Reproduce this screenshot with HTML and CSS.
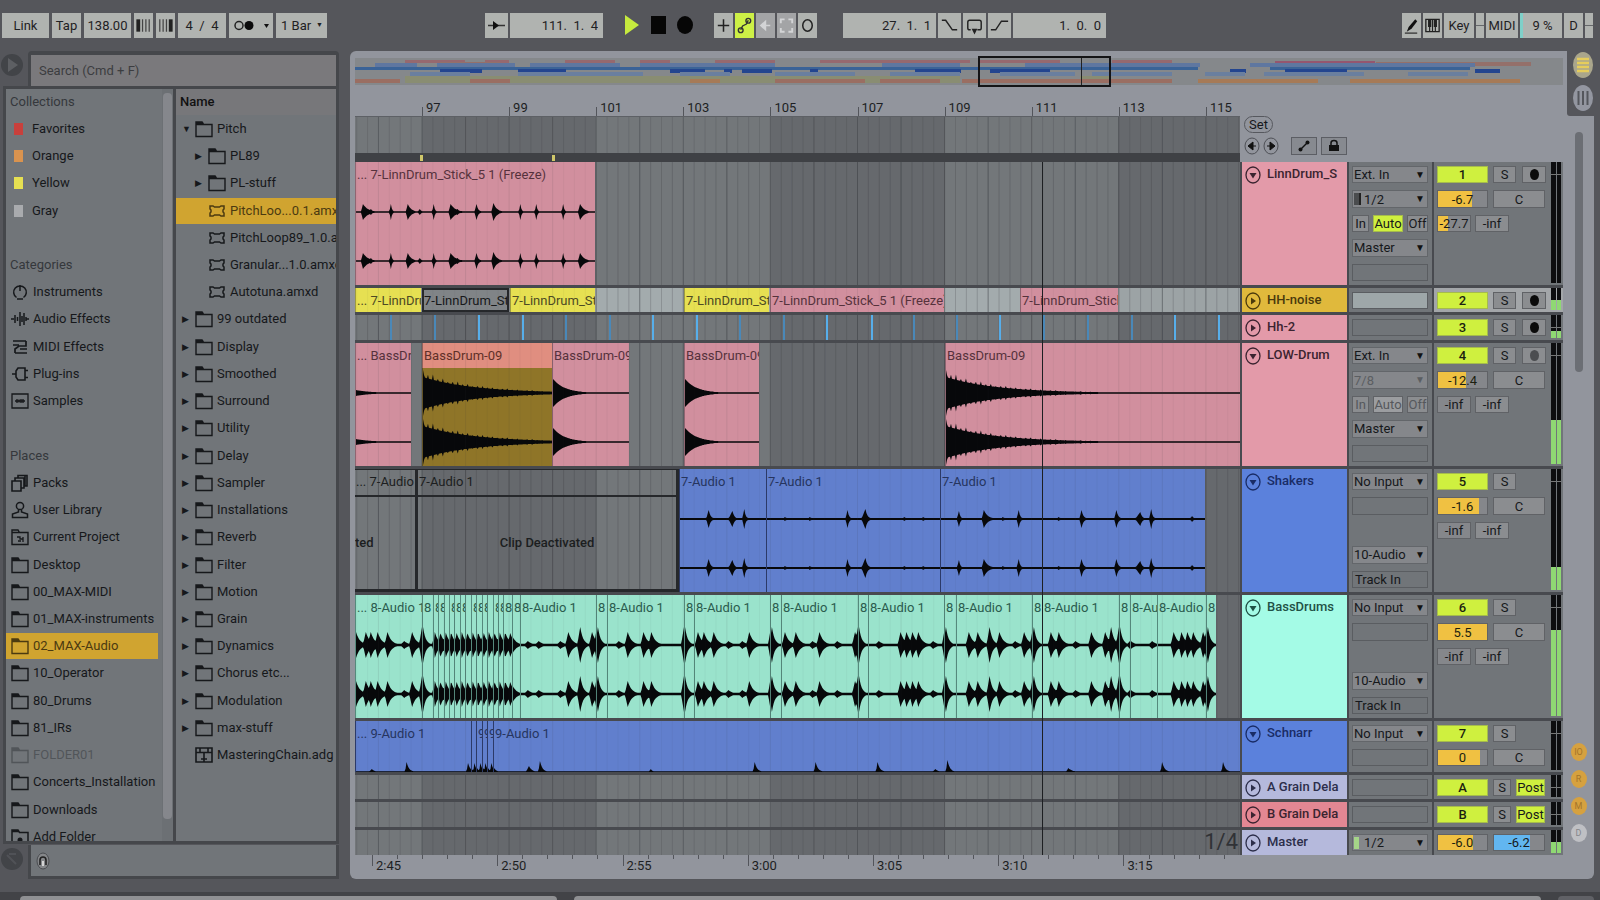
FILE: index.html
```
<!DOCTYPE html>
<html lang="en">
<head>
<meta charset="utf-8">
<title>Arrangement</title>
<link rel="stylesheet" href="styles.css">
</head>
<body>
<svg class="symbols" aria-hidden="true">
  <symbol id="folder" viewBox="0 0 18 18"><path d="M1 16.5V2h6l1.500 2.500H17v12zM1 2.500h6.500l1 2H1z" fill="none" stroke="currentColor" stroke-width="1.400"/><path d="M1 2h6l2 2.500H1z" fill="currentColor"/></symbol>
  <symbol id="device" viewBox="0 0 18 18"><path d="M2 4h3l1.500 1h5L13 4h3v3l-1 1v2l1 1v3h-3l-1.500-1h-5L5 14H2v-3l1-1V8L2 7z" fill="none" stroke="currentColor" stroke-width="1.500"/></symbol>
  <symbol id="rack" viewBox="0 0 18 18"><path d="M1 2h16v14H1zM1 6.500h16M9 6.500V16M5 2v4.500M13 2v4.500M6 13h6" fill="none" stroke="currentColor" stroke-width="1.600"/></symbol>
  <symbol id="instrument" viewBox="0 0 18 18"><path d="M5.500 14.500a6.300 6.300 0 1 1 7 0M9 2v6M6 16h6" fill="none" stroke="currentColor" stroke-width="1.500"/></symbol>
  <symbol id="audiofx" viewBox="0 0 18 18"><path d="M0 9h3M4 5v8M6.500 7v4M9 2v14M11 6v6M13 3v12M15 7v4M15 9h3" fill="none" stroke="currentColor" stroke-width="1.500"/></symbol>
  <symbol id="midifx" viewBox="0 0 18 18"><path d="M2 3h13M2 7h6M15 3v5H8L4 11v4M9 11h7M4 15h12" fill="none" stroke="currentColor" stroke-width="1.700"/></symbol>
  <symbol id="plugin" viewBox="0 0 18 18"><path d="M1 9h4M5 6l2-3h7v12H7l-2-3zM14 5.500h3M14 12.500h3" fill="none" stroke="currentColor" stroke-width="1.600"/></symbol>
  <symbol id="sample" viewBox="0 0 18 18"><path d="M1 2h16v14H1zM4 9h10M6 7v4M8 7.500v3M10 7v4M12 7v4" fill="none" stroke="currentColor" stroke-width="1.300"/></symbol>
  <symbol id="packs" viewBox="0 0 18 18"><path d="M1 7h9v10H1zM4 7V4h9v10h-3M7 4V1.500h9V12h-3M14 2v10" fill="none" stroke="currentColor" stroke-width="1.600"/></symbol>
  <symbol id="user" viewBox="0 0 18 18"><circle cx="9" cy="5" r="3.600" fill="none" stroke="currentColor" stroke-width="1.500"/><path d="M7.500 8.500v2.500L1.500 13v3.500h15V13l-6-2V8.500" fill="none" stroke="currentColor" stroke-width="1.500"/></symbol>
  <symbol id="project" viewBox="0 0 18 18"><path d="M1 16.500V2h6l1.500 2.500H17v12zM1 4.500h8" fill="none" stroke="currentColor" stroke-width="1.400"/><path d="M6 9h3v2h3V9M12 9v5M7 13h3" fill="none" stroke="currentColor" stroke-width="1.300"/></symbol>
  <symbol id="addfolder" viewBox="0 0 18 18"><path d="M1 18V2h6l1.500 2.500H17V18M1 3.500h7" fill="none" stroke="currentColor" stroke-width="1.500"/><circle cx="9" cy="12" r="2.500" fill="currentColor"/></symbol>
</svg>

<div class="app">
  <header class="toolbar">
    <div class="group">
      <button class="tb w-link">Link</button>
      <button class="tb w-tap">Tap</button>
      <input class="tb w-tempo" aria-label="Tempo" value="138.00">
      <button class="tb w-19" aria-label="Nudge down"><svg viewBox="0 0 20 25"><path d="M4.500 6v13" stroke="#222" stroke-width="4"/><path d="M9 6v13M12.500 6v13M16 6v13" stroke="#444" stroke-width="1.300"/></svg></button>
      <button class="tb w-19" aria-label="Nudge up"><svg viewBox="0 0 20 25"><path d="M15.500 6v13" stroke="#222" stroke-width="4"/><path d="M4 6v13M7.500 6v13M11 6v13" stroke="#444" stroke-width="1.300"/></svg></button>
      <input class="tb w-sig" aria-label="Time signature" value="4  /  4">
      <button class="tb w-metro" aria-label="Metronome"><svg viewBox="0 0 44 25"><circle cx="10" cy="12.500" r="4" fill="none" stroke="#222" stroke-width="1.500"/><circle cx="20" cy="12.500" r="4.500" fill="#0b0b0b"/><path d="M35 11h5l-2.500 4z" fill="#111"/></svg></button>
      <div class="tb quant"><select aria-label="Quantization"><option>1 Bar</option></select></div>
    </div>
    <div class="group center">
      <button class="tb w-follow" aria-label="Follow"><svg viewBox="0 0 23 25"><path d="M3 12.500h17" stroke="#333" stroke-width="1.500"/><path d="M8 8l6 4.500-6 4.500z" fill="#111"/></svg></button>
      <input class="tb pos" aria-label="Arrangement position" value="111.  1.  4">
      <div class="transport">
        <button aria-label="Play"><svg viewBox="0 0 20 24"><path d="M3 2l14 10L3 22z" fill="#c6ea3e"/></svg></button>
        <button aria-label="Stop"><svg viewBox="0 0 20 24"><path d="M3 3h15v18H3z" fill="#060606"/></svg></button>
        <button aria-label="Record"><svg viewBox="0 0 20 24"><ellipse cx="11" cy="12" rx="8" ry="9" fill="#060606"/></svg></button>
      </div>
      <button class="tb w-19" aria-label="Overdub"><svg viewBox="0 0 20 25"><path d="M4 12.500h12M10 6v13" stroke="#222" stroke-width="1.600"/></svg></button>
      <button class="tb w-19 on" aria-label="Automation arm"><svg viewBox="0 0 20 25"><path d="M6 17l2-4 4-2 2-4" fill="none" stroke="#333" stroke-width="1.500"/><circle cx="6" cy="17.500" r="2.500" fill="none" stroke="#333" stroke-width="1.500"/><circle cx="14" cy="7.500" r="2.500" fill="none" stroke="#333" stroke-width="1.500"/></svg></button>
      <button class="tb w-19 dim" aria-label="Re-enable automation"><svg viewBox="0 0 20 25"><path d="M10 8v9l-5-4.500zM10 12.500h5" fill="#d3d4d6" stroke="#d3d4d6" stroke-width="1.500"/></svg></button>
      <button class="tb w-19 dim" aria-label="Capture"><svg viewBox="0 0 20 25"><path d="M4 10V6h4M12 6h4v4M16 15v4h-4M8 19H4v-4" fill="none" stroke="#d3d4d6" stroke-width="2"/></svg></button>
      <button class="tb w-19" aria-label="Session record"><svg viewBox="0 0 20 25"><ellipse cx="10" cy="12.500" rx="5" ry="6" fill="none" stroke="#222" stroke-width="1.600"/></svg></button>
      <span class="spacer"></span>
      <input class="tb loop" aria-label="Loop start" value="27.  1.  1">
      <button class="tb w-23" aria-label="Punch in"><svg viewBox="0 0 24 25"><path d="M4 7h4l7 10h5" fill="none" stroke="#222" stroke-width="1.500"/></svg></button>
      <button class="tb w-23" aria-label="Loop"><svg viewBox="0 0 24 25"><path d="M8 17H7q-2 0-2-2V9q0-2 2-2h10q2 0 2 2v6q0 2-2 2h-2" fill="none" stroke="#222" stroke-width="1.500"/><path d="M9 16h6l-3 6z" fill="#222"/></svg></button>
      <button class="tb w-23" aria-label="Punch out"><svg viewBox="0 0 24 25"><path d="M3 17h5l6-9h7" fill="none" stroke="#222" stroke-width="1.500"/></svg></button>
      <input class="tb loop" aria-label="Loop length" value="1.  0.  0">
    </div>
    <div class="group right">
      <button class="tb w-19" aria-label="Draw mode"><svg viewBox="0 0 20 25"><path d="M5 19l2-5 7-8 2 2-6 8z" fill="#111"/><path d="M3 20.500h13" stroke="#222" stroke-width="1.200"/></svg></button>
      <button class="tb w-19" aria-label="Computer MIDI keyboard"><svg viewBox="0 0 20 25"><path d="M3 6h14v13H3z" fill="none" stroke="#222" stroke-width="1.400"/><path d="M7 6v8M13 6v8" stroke="#222" stroke-width="3.400"/><path d="M10 6v13M7 14v5M13 14v5" stroke="#222" stroke-width="1.200"/></svg></button>
      <button class="tb w-key">Key</button>
      <span class="tb w-led"></span>
      <button class="tb w-midi">MIDI</button>
      <span class="tb cpu">9 %</span>
      <button class="tb w-d">D</button>
      <span class="tb w-led"></span>
    </div>
  </header>

  <div class="workspace">
    <aside class="browser">
      <button class="corner" aria-label="Hide browser"><svg viewBox="0 0 24 28"><circle cx="12" cy="14" r="11" fill="#424448"/><path d="M8 7l10 7-10 7z" fill="#5d5f63"/></svg></button>
      <div class="search-wrap"><input class="search" type="search" aria-label="Search" placeholder="Search (Cmd + F)"></div>
      <div class="panes">
        <nav class="places" id="places"></nav>
        <div class="places-scroll"><i></i></div>
        <div class="files" id="files"></div>
      </div>
      <button class="corner" aria-label="Show info"><svg viewBox="0 0 24 28"><circle cx="12" cy="14" r="11" fill="#424448"/><path d="M7 10l9 9M9 9h7" stroke="#505257" stroke-width="2"/></svg></button>
      <div class="preview"><button aria-label="Preview"><svg viewBox="0 0 14 18"><ellipse cx="7" cy="9" rx="6" ry="8" fill="#85878a" stroke="#4a4c50"/><path d="M4 13V8a3 3 0 0 1 6 0v5" fill="none" stroke="#222" stroke-width="1.600"/><path d="M7 9v5" stroke="#d5d5d5" stroke-width="2"/></svg></button></div>
    </aside>

    <main class="arrange">
      <div class="overview" id="overview"></div>
      <div class="side-tabs">
        <button aria-label="Arrangement view"><svg viewBox="0 0 24 28"><ellipse cx="12" cy="14" rx="10" ry="13" fill="#aaa68c"/><path d="M6 8h12M6 12h12M6 16h12M6 20h12" stroke="#e6cd5c" stroke-width="2.500"/></svg></button>
        <button aria-label="Session view"><svg viewBox="0 0 24 28"><ellipse cx="12" cy="14" rx="10" ry="13" fill="#9396a0"/><path d="M7.500 7v14M12 7v14M16.500 7v14" stroke="#54565c" stroke-width="2"/></svg></button>
      </div>
      <div class="body">
        <section class="timeline">
          <div class="ruler" id="ruler"></div>
          <div class="scrub" id="scrub"></div>
          <div class="loopbar" id="loopbar"></div>
          <div class="lanes" id="lanes"></div>
          <div class="time" id="time"></div>
        </section>
        <section class="controls">
          <div class="locators">
            <button class="set">Set</button>
            <div class="locator-row">
              <button class="round" aria-label="Previous locator"><svg viewBox="0 0 16 18"><ellipse cx="8" cy="9" rx="7" ry="8" fill="none" stroke="#4e5056"/><path d="M9 5v8l-5-4zM8 9h4" fill="#111" stroke="#111"/></svg></button>
              <button class="round" aria-label="Next locator"><svg viewBox="0 0 16 18"><ellipse cx="8" cy="9" rx="7" ry="8" fill="none" stroke="#4e5056"/><path d="M7 5v8l5-4zM8 9H4" fill="#111" stroke="#111"/></svg></button>
              <button class="square first" aria-label="Automation mode"><svg viewBox="0 0 24 16"><path d="M8 12l8-8" stroke="#111" stroke-width="1.500"/><circle cx="8.500" cy="11.500" r="2" fill="#111"/><circle cx="15.500" cy="4.500" r="2" fill="#111"/></svg></button>
              <button class="square" aria-label="Lock envelopes"><svg viewBox="0 0 24 16"><path d="M7 7h10v6H7z" fill="#111"/><path d="M9 7V5a3 2.500 0 0 1 6 0v2" fill="none" stroke="#111" stroke-width="1.500"/></svg></button>
            </div>
          </div>
          <div id="tracks"></div>
        </section>
        <div class="side">
          <div class="vscroll"></div>
          <div class="toggles">
            <button class="show">IO</button><button class="show">R</button><button class="show">M</button><button class="show off">D</button>
          </div>
        </div>
      </div>
    </main>
  </div>
  <footer class="bottom"><div></div><div></div><div></div></footer>
</div>
<script src="app.js"></script>
</body>
</html>
```

FILE: styles.css
```
* { box-sizing: border-box; }
:root { --line: #484a4f; --light: #92959d; --panel: #717579; --text: #16181b; }
body { margin: 0; background: #55565b; color: var(--text); font: 400 13px/16px Roboto, "Liberation Sans", sans-serif; overflow: hidden; }
button, input, select { font: inherit; color: inherit; margin: 0; padding: 0; border: 0; border-radius: 0; background: none; }
svg { display: block; }
.symbols { display: none; }
.app { display: flex; flex-direction: column; min-height: 100vh; }

/* toolbar */
.toolbar { display: grid; grid-template-columns: 1fr auto 1fr; height: 51px; padding: 13px 7px 0 2px; }
.group { display: flex; align-items: flex-start; gap: 3px; }
.group.center { gap: 2px; margin-right: 4px; }
.group.right { gap: 2px; justify-content: flex-end; }
.tb { display: block; height: 25px; background: #b0b3b0; color: #1f2123; text-align: center; line-height: 25px; }
.tb svg { width: 100%; height: 25px; }
.tb.on { background: #cdf046; }
.tb.dim { background: #a3a4a6; }
.w-link { width: 47px; } .w-tap { width: 29px; } .w-tempo { width: 47px; } .w-19 { width: 19px; } .w-23 { width: 23px; }
.w-sig { width: 48px; white-space: pre; } .w-metro { width: 44px; } .w-follow { width: 23px; }
.w-key { width: 30px; } .w-midi { width: 32px; } .w-d { width: 19px; }
.w-led { width: 8px; background: linear-gradient(#b0b3b0 48%, #66686b 48% 54%, #b0b3b0 54%); }
.quant { position: relative; width: 51px; }
.quant::after { content: "▼"; position: absolute; right: 4px; top: 0; font-size: 7px; }
.quant select { appearance: none; width: 100%; height: 25px; padding-left: 5px; }
.pos, .loop { width: 93px; padding-right: 5px; text-align: right; white-space: pre; }
.transport { display: flex; gap: 6px; padding: 0 18px 0 17px; }
.transport svg { width: 20px; height: 24px; }
.spacer { width: 22px; }
.cpu { width: 42px; border-left: 3px solid #7fd0c9; }

/* browser */
.workspace { display: flex; flex: 1; gap: 11px; }
.browser { display: grid; grid-template: 35px 1fr 34px / 28px 1fr; width: 339px; }
.corner svg { width: 24px; height: 28px; }
.corner { align-self: start; }
.search-wrap { background: #45474b; padding: 4px 3px 0; border-radius: 4px 4px 0 0; }
.search { width: 100%; height: 31px; background: #7a797c; padding-left: 8px; appearance: none; }
.search::placeholder { color: #3c3d40; opacity: 1; }
.panes { grid-column: 1 / 3; display: grid; grid-template-columns: 156px 14px 1fr; margin-left: 3px; padding: 3px; background: #45474b; height: 758px; }
.places, .files { background: var(--panel); overflow: hidden; }
.rows { display: grid; grid-template-rows: repeat(28, 1fr); height: 101.4%; margin: -1px 0 0; padding: 0; list-style: none; }
.rows li { display: flex; align-items: center; min-height: 0; overflow: hidden; white-space: nowrap; }
.rows a { display: flex; align-items: center; width: 100%; height: 26px; color: inherit; text-decoration: none; }
.rows a.sel { background: #d0a430; color: #4b3a10; }
.rows .head { padding-left: 4px; color: #35383c; }
.rows a.off { color: #515559; }
.rows svg { flex: none; width: 18px; height: 18px; }
.places a { padding-left: 5px; gap: 4px; margin-right: 4px; }
.swatch { flex: none; width: 9px; height: 12px; margin: 0 5px 0 3px; }
.places-scroll { background: #6c7074; border-right: 3px solid #45474b; padding: 4px 1px 22px 1px; }
.places-scroll i { display: block; height: 100%; background: #85878c; border-radius: 4px; }
.files .name { background: #77777a; padding-left: 4px; color: #111; font-weight: 500; }
.files a { padding-left: 6px; gap: 4px; }
.files a.child { padding-left: 19px; }
.files a.leaf { padding-left: 32px; }
.files a.rack-row { padding-left: 19px; }
.files .tw { width: 9px; font-size: 9px; }
.preview { background: #45474b; padding: 0 3px 3px; }
.preview button { display: block; width: 100%; height: 31px; padding-left: 5px; background: var(--panel); }
.preview svg { width: 14px; height: 18px; }

/* arrangement */
.arrange { position: relative; flex: 1; display: flex; flex-direction: column; min-width: 0; margin-right: 6px; padding: 7px 0 0 5px; background: var(--light); border-radius: 6px; }
.overview { position: relative; height: 27px; margin-right: 31px; background: #85888b; }
.overview svg { width: 100%; height: 27px; }
.view { position: absolute; top: -2px; height: 31px; border: 2px solid #141416; }
.view::after { content: ""; position: absolute; left: 78%; top: 0; bottom: 0; width: 1px; background: #222; }
.side-tabs { position: absolute; right: -6px; top: 0; width: 33px; height: 65px; padding: 0 0 0 4px; background: #55565b; border-radius: 0 0 0 3px; }
.side-tabs button { display: block; margin-bottom: 5px; }
.side-tabs svg { width: 24px; height: 28px; }
.body { flex: 1; display: grid; grid-template-columns: minmax(0, 1fr) 323px 31px; }
.timeline { min-width: 0; }
.ruler { position: relative; height: 31px; }
.tick { position: absolute; bottom: 0; height: 9px; border-left: 1px solid #53555b; }
.tick span { position: absolute; left: 3px; bottom: 0; color: #1d1f23; }
.scrub { position: relative; height: 37px; background: #73777a; overflow: hidden; border-top: 1px solid #5d6065; }
.loopbar { position: relative; height: 9px; background: #3f4145; }
.mark { position: absolute; top: 2px; width: 3px; height: 6px; background: #cfc76a; }
.gridlines { position: absolute; left: 0; top: 0; width: 100%; height: 100%; pointer-events: none; }
.gridlines.over { opacity: .25; }
.lanes { position: relative; }
.lane, .track { border-bottom: 3px solid var(--line); }
.lane { position: relative; overflow: hidden; background: #73777a; }
.h-tall { height: 126px; } .h-mid { height: 54px; } .h-low { height: 27px; } .h-low2 { height: 28px; } .h-last { height: 25px; }
.lane.h-last { border-bottom: 0; }
.lane.lit { background: #a3abad; }
.lane.lit .shade { opacity: .3; }
.shade { position: absolute; top: 0; bottom: 0; background: rgba(60, 60, 64, .22); }
.clip { position: absolute; top: 0; bottom: 0; overflow: hidden; white-space: nowrap; padding: 5px 0 0 1px; border-left: 1px solid rgba(20, 22, 30, .35); }
.clip b { position: relative; font-weight: 400; }
.clip svg { position: absolute; left: 0; top: 0; width: 100%; height: 100%; }
.pink { background: #d18f9e; color: #56323c; }
.yellow { background: #e6e052; color: #4d4a24; }
.grey { background: #808487; color: #17181a; border: 2px solid #26282b; padding: 3px 0 0; }
.gold { background: linear-gradient(#e08e80 25px, #8f7528 25px); color: #5f3028; }
.blue { background: #617fcd; color: #26355f; border-color: #2c3a68; }
.mint { background: #9ae3cc; color: #2b5b4e; border-color: #55897c; }
.dead { border: solid #26282b; border-width: 1px 3px 3px 0; color: #1c1e20; padding-top: 4px; }
.dead::after { content: ""; position: absolute; left: 0; right: 0; top: 25px; border-top: 2px solid #26282b; }
.dead em { position: absolute; left: 0; right: 0; top: 65px; text-align: center; font-style: normal; font-weight: 500; }
.dead em.cut { text-align: left; }
.note { position: absolute; top: 0; bottom: 0; width: 2px; background: #4a88b8; }
.note.hot { background: #57aeea; }
.playhead { position: absolute; top: 0; bottom: 0; width: 1px; background: #1d1f22; }
.zoomlevel { position: absolute; right: 2px; bottom: 2px; font-size: 22px; line-height: 22px; color: #303236; }
.time { position: relative; height: 24px; }
.time .tick { top: 0; bottom: auto; height: 11px; }
.time .tick.minor { height: 4px; }
.time .tick span { top: 3px; bottom: auto; }

/* track controls */
.locators { height: 77px; padding: 31px 0 0 4px; }
.set { display: block; width: 29px; height: 17px; border: 1px solid #56585e; border-radius: 9px; line-height: 15px; }
.locator-row { display: flex; gap: 3px; margin-top: 4px; align-items: center; }
.round svg { width: 16px; height: 18px; }
.square { height: 18px; width: 26px; border: 1px solid #5c5e64; background: #878a90; }
.square.first { margin-left: 9px; margin-right: 1px; }
.square svg { width: 24px; height: 16px; }
.track { display: grid; grid-template-columns: 105px 83px 129px; gap: 2px; padding-left: 2px; background: var(--line); }
.track.h-last { border: 0; }
.title { display: flex; align-items: flex-start; gap: 6px; padding: 4px 0 0 3px; white-space: nowrap; overflow: hidden; color: #3b2430; font-weight: 500; }
.title.c-blue { color: #192c66; } .title.c-mint { color: #1f5145; } .title.c-lav { color: #2c2e4a; } .title.c-sun { color: #4a3a0c; }
.title svg { width: 16px; height: 18px; flex: none; }
.c-rose { background: #e39aa9; } .c-sun { background: #e0b93c; } .c-blue { background: #5b81dc; } .c-mint { background: #a4fbe6; } .c-lav { background: #b5b9dc; } .c-red { background: #e38793; }
.io, .mix { display: grid; align-content: start; grid-auto-rows: 17px; gap: 7px; padding: 4px 4px 0 3px; background: var(--panel); min-height: 0; }
.h-tall .io, .h-tall .mix { grid-template-rows: repeat(5, minmax(0, 1fr)); align-content: stretch; padding-bottom: 4px; }
.mix { position: relative; padding-right: 18px; }
.mix.lit { background: #a3a6a9; }
.box { border: 1px solid #5a5d61; min-height: 0; line-height: 15px; padding-left: 2px; white-space: nowrap; overflow: hidden; }
.box.lit { background: #9ea7a9; }
.sel-wrap { position: relative; background: #85878b; border: 1px solid #63666a; min-height: 0; }
.sel-wrap::after { content: "▼"; position: absolute; right: 2px; top: 0; font-size: 10px; line-height: 15px; color: #111; pointer-events: none; }
.sel-wrap select { display: block; appearance: none; width: 100%; height: 100%; padding-left: 1px; line-height: 15px; }
.sel-wrap.ch select { padding-left: 11px; }
.sel-wrap.ch::before { content: ""; position: absolute; left: 1px; top: 2px; width: 5px; height: 12px; border-right: 2px solid #222; background: #4a4c4e; }
.sel-wrap.live::before { background: #a5d588; border-right: 0; }
.sel-wrap.gone { color: #5b5e62; }
.sel-wrap.gone::after { color: #5b5e62; }
.line { display: flex; min-height: 0; }
.line.mon { justify-content: space-between; }
.b { height: 100%; border: 1px solid #606266; background: #8b8d90; text-align: center; line-height: 15px; white-space: nowrap; overflow: hidden; }
.b.in { width: 17px; } .b.auto { width: 30px; } .b.off { width: 21px; }
.b.lime { background: #cff03f; border-color: #a5bb4c; font-weight: 500; }
.b.soft { color: #55585c; }
.b.soft.auto { background: #9b9da0; }
.b.num { width: 51px; margin-right: 5px; color: #1c1f10; }
.b.s { width: 23px; margin-right: 6px; }
.b.rec { width: 24px; }
.b.c { width: 52px; }
.b.sm { width: 18px; margin-right: 5px; }
.b.post { width: 29px; font-weight: 400; }
.b.auto { font-weight: 400; }
.b.send { width: 34px; margin-right: 4px; }
.rec i { display: block; width: 9px; height: 11px; margin: 0 auto; border-radius: 50%; background: #0b0b0b; }
.rec.idle i { background: #4b4d50; }
.meter { position: absolute; right: 2px; top: 0; bottom: 2px; width: 10px; display: flex; gap: 1px; }
.meter i { position: relative; flex: 1; background: #0d0d0f; }
.meter i::before { content: ""; position: absolute; left: 0; right: 0; top: 12px; border-top: 1px solid #777; }
.meter i::after { content: ""; position: absolute; left: 0; right: 0; bottom: 0; height: var(--level); background: #8fd873; }

/* right edge */
.side { display: flex; flex-direction: column; justify-content: space-between; padding: 47px 0 37px; align-items: center; }
.vscroll { width: 8px; height: 240px; background: #6b6e74; border-radius: 4px; }
.toggles { display: flex; flex-direction: column; gap: 9px; }
.show { display: block; width: 16px; height: 18px; border-radius: 50%; background: #d6a13f; color: #a4752a; font-size: 9px; line-height: 18px; text-align: center; overflow: hidden; }
.show.off { background: #bfc0c4; color: #85878b; }

.bottom { display: grid; grid-template-columns: 539fr 972fr 36fr; gap: 17px; height: 21px; padding: 3px 6px 0 20px; background: linear-gradient(#55565b 13px, #424347 13px); align-items: end; }
.bottom div { height: 4px; background: #8f9093; border-radius: 4px 4px 0 0; }
.bottom div:last-child { background: #606166; }
```

FILE: app.js
```
// Horizontal view of the arrangement, in timeline units.
const FROM = 355, SPAN = 885;
const pct = x => ((x - FROM) / SPAN * 100).toFixed(3) + '%';
const wpct = w => (w / SPAN * 100).toFixed(3) + '%';
const $ = id => document.getElementById(id);
const icon = n => `<svg aria-hidden="true"><use href="#${n}"/></svg>`;

/* ---------- browser ---------- */
const places = [
  ['head', 'Collections'], ['#c8403c', 'Favorites'], ['#d9934f', 'Orange'], ['#e6e052', 'Yellow'], ['#a9abae', 'Gray'], null,
  ['head', 'Categories'], ['instrument', 'Instruments'], ['audiofx', 'Audio Effects'], ['midifx', 'MIDI Effects'], ['plugin', 'Plug-ins'], ['sample', 'Samples'], null,
  ['head', 'Places'], ['packs', 'Packs'], ['user', 'User Library'], ['project', 'Current Project'], ['folder', 'Desktop'], ['folder', '00_MAX-MIDI'],
  ['folder', '01_MAX-instruments'], ['folder', '02_MAX-Audio', 'sel'], ['folder', '10_Operator'], ['folder', '80_Drums'], ['folder', '81_IRs'],
  ['folder', 'FOLDER01', 'off'], ['folder', 'Concerts_Installation'], ['folder', 'Downloads'], ['addfolder', 'Add Folder'],
];
$('places').innerHTML = '<ul class="rows">' + places.map(p => {
  if (!p) return '<li></li>';
  const [k, t, c = ''] = p;
  if (k === 'head') return `<li class="head">${t}</li>`;
  const mark = k[0] === '#' ? `<i class="swatch" style="background:${k}"></i>` : icon(k);
  return `<li><a href="#" class="${c}">${mark}${t}</a></li>`;
}).join('') + '</ul>';

const folders = ['99 outdated', 'Display', 'Smoothed', 'Surround', 'Utility', 'Delay', 'Sampler', 'Installations', 'Reverb', 'Filter', 'Motion', 'Grain', 'Dynamics', 'Chorus etc...', 'Modulation', 'max-stuff'];
const dir = (t, c = '', tw = '▶') => `<li><a href="#" class="${c}"><span class="tw">${tw}</span>${icon('folder')}${t}</a></li>`;
const leaf = (t, c = '', i = 'device') => `<li><a href="#" class="${c}">${icon(i)}${t}</a></li>`;
$('files').innerHTML = '<ul class="rows"><li class="name">Name</li>' + dir('Pitch', '', '▼') + dir('PL89', 'child') + dir('PL-stuff', 'child')
  + leaf('PitchLoo...0.1.amxd', 'leaf sel') + leaf('PitchLoop89_1.0.amxd', 'leaf') + leaf('Granular...1.0.amxd', 'leaf') + leaf('Autotuna.amxd', 'leaf')
  + folders.map(f => dir(f)).join('') + leaf('MasteringChain.adg', 'rack-row', 'rack') + '</ul>';

/* ---------- overview ---------- */
const bands = [
  ['#96696f', 2, 3, [[405,60],[485,24],[565,50],[640,30],[715,60],[820,150],[980,20],[1000,60],[1112,60]]],
  ['#95566f', 3, 5, [[1275,100]]],
  ['#94706a', 4, 4, [[440,60],[1376,155]]],
  ['#5f77a0', 5, 4, [[375,42],[437,78],[530,90],[640,135],[882,78],[1025,175],[1250,50],[1265,210]]],
  ['#3a6397', 9, 3, [[355,843],[1270,200]]],
  ['#23458f', 11, 4, [[440,42],[518,48],[670,35],[724,8],[742,30],[810,8],[915,46],[990,60],[1230,16],[1285,62],[1305,20],[1475,25]]],
  ['#6a7f9f', 14, 4, [[410,60],[518,125],[680,50],[775,80],[890,70],[1000,75],[1092,80],[1205,40],[1264,100],[1408,60]]],
  ['#898d72', 18, 7, [[405,390],[790,170],[1080,30]]],
  ['#9a6e62', 21, 4, [[355,45],[470,40],[775,90],[880,60],[962,210]]],
  ['#a67a57', 21, 4, [[690,30],[1198,120],[1350,170]]],
];
$('overview').innerHTML = '<svg viewBox="355 0 1208 27" preserveAspectRatio="none">' +
  bands.map(([c, y, h, s]) => s.map(([x, w]) => `<rect x="${x}" y="${y}" width="${w}" height="${h}" fill="${c}"/>`).join('')).join('') +
  `</svg><div class="view" style="left:${(623 / 12.08).toFixed(2)}%;width:${(133 / 12.08).toFixed(2)}%"></div>`;

/* ---------- grid and rulers ---------- */
const BAR = 43.55, FIRST = 422;
let lines = '';
for (let i = -6; i < 76; i++) {
  const x = FIRST + i * BAR / 4;
  lines += `<path d="M${x} 0V10" stroke="#34373c" stroke-opacity="${i % 4 === 0 ? .4 : .17}" vector-effect="non-scaling-stroke"/>`;
}
const grid = (c = '') => `<svg class="gridlines ${c}" viewBox="${FROM} 0 ${SPAN} 10" preserveAspectRatio="none">${lines}</svg>`;
const shades = [[422, 174], [771, 174], [1118, 122]].map(([x, w]) => `<div class="shade" style="left:${pct(x)};width:${wpct(w)}"></div>`).join('');
$('ruler').innerHTML = [97, 99, 101, 103, 105, 107, 109, 111, 113, 115].map((n, i) => `<div class="tick" style="left:${pct(422 + i * 87.1)}"><span>${n}</span></div>`).join('');
$('scrub').innerHTML = shades + grid();
$('loopbar').innerHTML = [420, 552].map(x => `<i class="mark" style="left:${pct(x)}"></i>`).join('');
let time = '';
for (let i = 0; i < 35; i++) {
  const x = 372 + i * 25.05, t = 165 + i;
  time += i % 5 ? `<div class="tick minor" style="left:${pct(x)}"></div>`
    : `<div class="tick" style="left:${pct(x)}"><span>${Math.floor(t / 60)}:${String(t % 60).padStart(2, '0')}</span></div>`;
}
$('time').innerHTML = time;

/* ---------- waveforms ---------- */
// A hit is [x, height, attack, decay]; the outline is the largest envelope at each step.
function wave(x0, x1, hits, centres, base, h = 123, floor = false) {
  const upper = [], lower = [];
  for (let x = x0; x <= x1; x++) {
    let a = base;
    for (const [hx, amp, at, de] of hits) {
      const d = x - hx;
      const v = d < 0 ? amp * Math.max(0, 1 + d / at) : amp * Math.exp(-d / de);
      if (v > a) a = v;
    }
    upper.push([x, a]); lower.unshift([x, a]);
  }
  const paths = centres.map(c => '<path d="M' + upper.map(([x, a]) => `${x} ${(c - a).toFixed(1)}`).join('L') + 'L' +
    lower.map(([x, a]) => `${x} ${(floor ? c : c + a).toFixed(1)}`).join('L') + 'Z" fill="#07080a"/>').join('');
  return `<svg viewBox="${x0} 0 ${x1 - x0} ${h}" preserveAspectRatio="none">${paths}</svg>`;
}
// Kick tail; the rough variant has an uneven edge.
function tail(x0, x1, amp, len, rough) {
  const hits = [[x0, amp, 1, len]];
  if (rough) {
    hits.push([x0, 23, 1, 4]);
    for (let i = 1; i < 30; i++) {
      const x = x0 + i * 5;
      hits.push([x, amp * Math.exp(-i * 5 / len) * (1.1 + .3 * ((i * 7) % 5) / 4), 1.5, 2.5]);
    }
  }
  return wave(x0, x1, hits, [50, 99], .7);
}
const clip = (x0, x1, cls, label, body = '') => `<div class="clip ${cls}" style="left:${pct(x0)};width:${wpct(x1 - x0)}">${body}<b>${label}</b></div>`;
const lane = (h, inner, cls = '') => `<div class="lane ${h} ${cls}">${shades}${grid()}${inner}${inner ? grid('over') : ''}</div>`;
const C = [50, 99];

const stick = [[362,8,2,5],[370,3,2,2],[390,8,1.5,1.2],[407,8,2,3.5],[419,3,2,2],[433,8,1.5,1.2],[450,8,2,5],[457,3,2,2],[476,8,2,1.8],[493,9,2,3.5],[520,8,1.5,1.2],[536,8,1.5,1.2],[563,8,1.5,1.2],[580,8,2,4]];
const shaker = [[708,9,2.5,2],[732,8,4,2],[744,10,2,1.5],[784,2,2,2],[809,2,2,2],[847,9,2,1.5],[865,10,4,2],[904,2,2,2],[923,2,2,2],[958,8,2,1.5],[983,9,2,4],[1002,2,2,2],[1018,9,2,1.5],[1058,2,2,2],[1081,9,2,2],[1116,9,2,2],[1140,7,5,2],[1151,10,2,1.5],[1192,3,2,2]];
const tall = [422,580,597,684,771,858,945,989,1033,1111,1119,1207].map(x => [x, 18, 3, 3]);
const mid = [355,365,370,377,387,412,568,592,627,643,651,697,703,713,749,784,795,819,855,900,906,912,918,968,977,999,1024,1050,1058,1091,1105,1173,1181,1187,1193,1203].map(x => [x, 13, 3, 4]);
const roll = Array.from({ length: 15 }, (_, i) => [434 + i * 5.4, 13, 1.5, 4.5]);
const small = [404,527,538,560,618,728,742,812,837,878,933,1015,1075,1130,1152].map(x => [x, 4, 4, 4]);
const bass = [...tall, ...mid, ...roll, ...small];
const cuts = [355,422,433,438,444,449,454,460,465,471,476,482,487,493,498,503,512,520,596,607,684,694,770,781,858,868,944,956,1032,1042,1119,1130,1157,1206,1216];
const mint = cuts.slice(0, -1).map((x, i) => clip(x, cuts[i + 1], 'mint', i ? (cuts[i + 1] - x < 7 ? (i % 4 ? '8' : '') : cuts[i + 1] - x < 13 ? '8' : '8-Audio 1') : '... 8-Audio 1', wave(x, cuts[i + 1], bass, C, 1.3))).join('');

const blips = [[371,3,3,3],[406,10,1.5,2.5],[468,9,1.5,2.5],[474,9,1.5,2.5],[480,9,1.5,2.5],[485,9,1.5,2.5],[491,9,1.5,2.5],[528,6,3,3],[539,11,1.5,2.5],[650,3,2,2],[754,10,1.5,2.5],[815,10,1.5,2.5],[877,10,1.5,2.5],[935,3,3,3],[947,12,1.5,2.5],[1068,4,2,4],[1162,10,1.5,2.5],[1223,10,1.5,2.5]];
const bcuts = [355,471,476,482,487,493,1240];
const blueTail = bcuts.slice(0, -1).map((x, i) => clip(x, bcuts[i + 1], 'blue', i === 0 ? '... 9-Audio 1' : i < 2 ? '' : i < 5 ? '9' : '9-Audio 1', wave(x, bcuts[i + 1], blips, [51], .8, 51, true))).join('');

const notes = [390,434,477.5,522,565,609,652,696,739,783,826,871,913,956,999,1043,1087,1131,1174,1218].map((x, i) => `<i class="note ${[2,3,6,7,10,11,14,18,19].includes(i) ? 'hot' : ''}" style="left:${pct(x)}"></i>`).join('');

$('lanes').innerHTML =
  lane('h-tall', clip(355, 595, 'pink', '... 7-LinnDrum_Stick_5 1 (Freeze)', wave(355, 595, stick, C, .8))) +
  lane('h-low', clip(355, 421, 'yellow', '... 7-LinnDrum_Stick') + clip(422, 509, 'grey', '7-LinnDrum_Stick') + clip(510, 595, 'yellow', '7-LinnDrum_Stick') +
    clip(684, 769, 'yellow', '7-LinnDrum_Stick') + clip(770, 944, 'pink', '7-LinnDrum_Stick_5 1 (Freeze)') + clip(1020, 1118, 'pink', '7-LinnDrum_Stick'), 'lit') +
  lane('h-low2', notes) +
  lane('h-tall', clip(355, 411, 'pink', '... BassDrum', tail(355, 411, 3, 16)) + clip(422, 552, 'gold', 'BassDrum-09', tail(422, 552, 16, 52, true)) +
    clip(552, 629, 'pink', 'BassDrum-09', tail(552, 629, 14, 12)) + clip(684, 759, 'pink', 'BassDrum-09', tail(684, 759, 14, 12)) +
    clip(945, 1240, 'pink', 'BassDrum-09', tail(945, 1240, 16, 52, true))) +
  lane('h-tall', clip(355, 418, 'dead', '... 7-Audio 1', '<em class="cut">ted</em>') + clip(418, 679, 'dead', '7-Audio 1', '<em>Clip Deactivated</em>') +
    clip(679, 766, 'blue', '7-Audio 1', wave(679, 766, shaker, C, .9)) + clip(766, 940, 'blue', '7-Audio 1', wave(766, 940, shaker, C, .9)) +
    clip(940, 1205, 'blue', '7-Audio 1', wave(940, 1205, shaker, C, .9))) +
  lane('h-tall', mint) + lane('h-mid', blueTail) + lane('h-low', '') + lane('h-low2', '') + lane('h-last', '') +
  `<div class="zoomlevel">1/4</div><div class="playhead" style="left:${pct(1042)}"></div>`;

/* ---------- track controls ---------- */
const fold = open => `<svg viewBox="0 0 16 18" aria-hidden="true"><ellipse cx="8" cy="9" rx="7" ry="8" fill="none" stroke="currentColor" stroke-width="1.300"/><path d="${open ? 'M4.500 7h7L8 12.500z' : 'M6 5.500v7l5-3.500z'}" fill="currentColor"/></svg>`;
const sel = (t, label, c = '') => `<div class="sel-wrap ${c}"><select aria-label="${label}"><option>${t}</option></select></div>`;
const box = (t = '', c = '') => `<div class="box ${c}">${t}</div>`;
const fill = (c, p) => `style="background:linear-gradient(90deg,${c} ${p}%,#85878b ${p}%)"`;
const SUN = '#f0c142', SKY = '#62b6f0';
const num = t => `<button class="b num lime">${t}</button>`;
const rec = (c = '') => `<button class="b rec ${c}" aria-label="Arm"><i></i></button>`;
const act = (n, r) => `<div class="line">${num(n)}<button class="b s">S</button>${r || ''}</div>`;
const vol = (v, p) => `<div class="line"><button class="b num" ${fill(SUN, p)}>${v}</button><button class="b c">C</button></div>`;
const sends = (a, p, b) => `<div class="line"><button class="b send" ${fill(SUN, p)}>${a}</button><button class="b send">${b}</button></div>`;
const ret = n => `<div class="line">${num(n)}<button class="b sm">S</button><button class="b post lime">Post</button></div>`;
const mon = (s, on) => `<div class="line mon"><button class="b in ${s}">In</button><button class="b auto ${on}">Auto</button><button class="b off ${s}">Off</button></div>`;
const gap = '<span></span>';

const tracks = [
  ['h-tall', 'c-rose', 1, 'LinnDrum_S', sel('Ext. In', 'Input type') + sel('1/2', 'Input channel', 'ch') + mon('', 'lime') + sel('Master', 'Output') + box(), act(1, rec()) + vol('-6.7', 70) + sends('-27.7', 32, '-inf'), 0],
  ['h-low', 'c-sun', 0, 'HH-noise', box('', 'lit'), act(2, rec()), 45],
  ['h-low2', 'c-rose', 0, 'Hh-2', box(), act(3, rec()), 30],
  ['h-tall', 'c-rose', 1, 'LOW-Drum', sel('Ext. In', 'Input type') + sel('7/8', 'Input channel', 'gone') + mon('soft', 'soft') + sel('Master', 'Output') + box(), act(4, rec('idle')) + vol('-12.4', 57) + sends('-inf', 0, '-inf'), 36],
  ['h-tall', 'c-blue', 1, 'Shakers', sel('No Input', 'Input type') + box() + gap + sel('10-Audio', 'Output') + box('Track In'), act(5) + vol('-1.6', 83) + sends('-inf', 0, '-inf'), 19],
  ['h-tall', 'c-mint', 1, 'BassDrums', sel('No Input', 'Input type') + box() + gap + sel('10-Audio', 'Output') + box('Track In'), act(6) + vol('5.5', 100) + sends('-inf', 0, '-inf'), 71],
  ['h-mid', 'c-blue', 1, 'Schnarr', sel('No Input', 'Input type') + box(), act(7) + vol('0', 85), 0],
  ['h-low', 'c-lav', 0, 'A Grain Dela', box(), ret('A'), 0],
  ['h-low2', 'c-red', 0, 'B Grain Dela', box(), ret('B'), 0],
  ['h-last', 'c-lav', 0, 'Master', sel('1/2', 'Master output', 'ch live'), `<div class="line"><button class="b num" ${fill(SUN, 72)}>-6.0</button><button class="b c" ${fill(SKY, 72)}>-6.2</button></div>`, 50],
];
$('tracks').innerHTML = tracks.map(([h, c, open, name, io, mix, lvl], i) =>
  `<div class="track ${h}"><div class="title ${c}">${fold(open)}<span>${name}</span></div><div class="io">${io}</div><div class="mix ${i === 1 ? 'lit' : ''}">${mix}<div class="meter" style="--level:${lvl}%"><i></i><i></i></div></div></div>`).join('');
```
